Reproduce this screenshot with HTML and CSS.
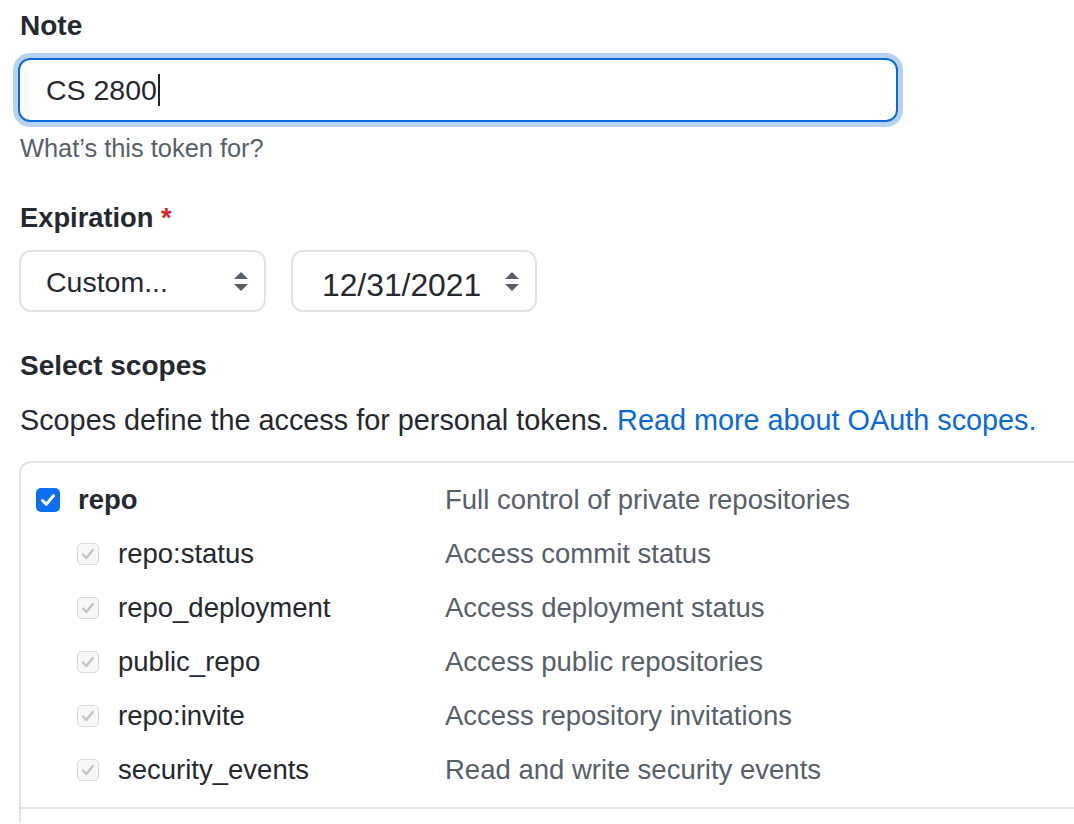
FILE: index.html
```html
<!DOCTYPE html>
<html lang="en">
<head>
<meta charset="utf-8">
<title>New personal access token</title>
<link rel="stylesheet" href="styles.css">
</head>
<body>
<div class="page">
  <div class="form-group">
    <label class="label">Note</label>
    <div class="input is-focused"><span class="input-value">CS 2800</span><span class="caret"></span></div>
    <p class="note">What’s this token for?</p>
  </div>

  <div class="form-group expiration">
    <label class="label label-expiration">Expiration <span class="required">*</span></label>
    <div class="selects">
      <div class="select select-preset">
        <span class="select-text">Custom...</span>
        <svg class="updown" width="14" height="19" viewBox="0 0 14 19"><polygon points="0,7 7,0 14,7"/><polygon points="0,12 14,12 7,19"/></svg>
      </div>
      <div class="select select-date">
        <span class="select-text">12/31/2021</span>
        <svg class="updown" width="14" height="19" viewBox="0 0 14 19"><polygon points="0,7 7,0 14,7"/><polygon points="0,12 14,12 7,19"/></svg>
      </div>
    </div>
  </div>

  <div class="form-group scopes-section">
    <h3 class="label">Select scopes</h3>
    <p class="scopes-intro">Scopes define the access for personal tokens. <a class="link" href="#">Read more about OAuth scopes.</a></p>

    <div class="scopes">
      <div class="scope-group">
        <div class="scope-row parent">
          <div class="scope-main">
            <span class="cb cb-checked"><svg width="24" height="24" viewBox="0 0 24 24"><path d="M6.5 12.5l3.8 3.8 7.2-8.6"/></svg></span>
            <span class="scope-name">repo</span>
          </div>
          <div class="scope-desc">Full control of private repositories</div>
        </div>
        <div class="scope-row child">
          <div class="scope-main">
            <span class="cb cb-disabled"><svg width="22" height="22" viewBox="0 0 22 22"><path d="M6 11.5l3.3 3.4 6.5-8"/></svg></span>
            <span class="scope-name">repo:status</span>
          </div>
          <div class="scope-desc">Access commit status</div>
        </div>
        <div class="scope-row child">
          <div class="scope-main">
            <span class="cb cb-disabled"><svg width="22" height="22" viewBox="0 0 22 22"><path d="M6 11.5l3.3 3.4 6.5-8"/></svg></span>
            <span class="scope-name">repo_deployment</span>
          </div>
          <div class="scope-desc">Access deployment status</div>
        </div>
        <div class="scope-row child">
          <div class="scope-main">
            <span class="cb cb-disabled"><svg width="22" height="22" viewBox="0 0 22 22"><path d="M6 11.5l3.3 3.4 6.5-8"/></svg></span>
            <span class="scope-name">public_repo</span>
          </div>
          <div class="scope-desc">Access public repositories</div>
        </div>
        <div class="scope-row child">
          <div class="scope-main">
            <span class="cb cb-disabled"><svg width="22" height="22" viewBox="0 0 22 22"><path d="M6 11.5l3.3 3.4 6.5-8"/></svg></span>
            <span class="scope-name">repo:invite</span>
          </div>
          <div class="scope-desc">Access repository invitations</div>
        </div>
        <div class="scope-row child">
          <div class="scope-main">
            <span class="cb cb-disabled"><svg width="22" height="22" viewBox="0 0 22 22"><path d="M6 11.5l3.3 3.4 6.5-8"/></svg></span>
            <span class="scope-name">security_events</span>
          </div>
          <div class="scope-desc">Read and write security events</div>
        </div>
      </div>
      <div class="scope-group scope-group-next"></div>
    </div>
  </div>
</div>
</body>
</html>
```

FILE: styles.css
```css
html, body {
  margin: 0;
  padding: 0;
  background: #ffffff;
  overflow: hidden;
}

body {
  font-family: "Liberation Sans", Arial, sans-serif;
  color: #24292f;
}

.page {
  padding: 8px 0 0 20px;
}

.label {
  display: block;
  margin: 0;
  font-size: 28px;
  line-height: 36px;
  font-weight: 700;
  color: #24292f;
}

.label-expiration {
  font-size: 27.3px;
}

.required {
  color: #cf222e;
}

/* Note input */
.input {
  box-sizing: border-box;
  width: 880px;
  height: 64px;
  margin: 14px 0 0 -2px;
  padding: 0 0 0 26px;
  display: flex;
  align-items: center;
  border: 2px solid #0969da;
  border-radius: 12px;
  box-shadow: 0 0 0 5px #b6d2f2;
  font-size: 28.5px;
  color: #24292f;
}

.caret {
  display: inline-block;
  width: 2px;
  height: 32px;
  margin-left: 1px;
  background: #1f2328;
}

.note {
  margin: 10px 0 0;
  font-size: 25.4px;
  line-height: 32px;
  color: #57606a;
}

.expiration {
  margin-top: 36px;
}

.selects {
  display: flex;
  gap: 25px;
  margin: 14px 0 0 -1px;
}

.select {
  box-sizing: border-box;
  height: 62px;
  display: flex;
  align-items: center;
  justify-content: space-between;
  border: 2px solid #e0e4e8;
  border-radius: 12px;
  padding-right: 16px;
  color: #24292f;
}

.select-preset {
  width: 247px;
  padding-left: 25px;
  font-size: 28.5px;
}

.select-preset .select-text {
  padding-top: 3px;
}

.select-date {
  width: 246px;
  padding-left: 29px;
  font-size: 31.8px;
}

.select-date .select-text {
  padding-top: 9px;
}

.updown {
  fill: #57606a;
  flex: none;
}

/* Scopes */
.scopes-section {
  margin-top: 36px;
}

.scopes-intro {
  margin: 18px 0 0;
  font-size: 28.8px;
  line-height: 36px;
  color: #24292f;
}

.link {
  color: #0969da;
  text-decoration: none;
}

.scopes {
  width: 1100px;
  margin: 23px 0 0 -1px;
  border-top: 2px solid #e1e4e8;
  border-left: 2px solid #e1e4e8;
  border-top-left-radius: 12px;
}

.scope-group {
  padding: 10px 0;
  border-bottom: 2px solid #e1e4e8;
}

.scope-group-next {
  height: 0;
  padding: 0 0 14px;
  border-bottom: none;
}

.scope-row {
  display: grid;
  grid-template-columns: 424px 1fr;
  align-items: center;
  height: 54px;
  font-size: 27.5px;
}

.scope-main {
  display: flex;
  align-items: center;
}

.parent .scope-main {
  padding-left: 15px;
  gap: 18px;
}

.child .scope-main {
  padding-left: 56px;
  gap: 19px;
}

.scope-name {
  color: #24292f;
}

.parent .scope-name {
  font-weight: 700;
}

.scope-desc {
  color: #57606a;
}

.cb {
  box-sizing: border-box;
  display: inline-flex;
  flex: none;
  border-radius: 5px;
}

.cb svg {
  fill: none;
  stroke-linecap: round;
  stroke-linejoin: round;
}

.cb-checked {
  width: 24px;
  height: 24px;
  background: #0d6ef2;
}

.cb-checked svg {
  stroke: #ffffff;
  stroke-width: 3;
}

.cb-disabled {
  width: 22px;
  height: 22px;
  background: #f7f7f7;
  border: 1px solid #d9d9d9;
}

.cb-disabled svg {
  margin: -1px;
  stroke: #c3c3c3;
  stroke-width: 2.4;
}
```
